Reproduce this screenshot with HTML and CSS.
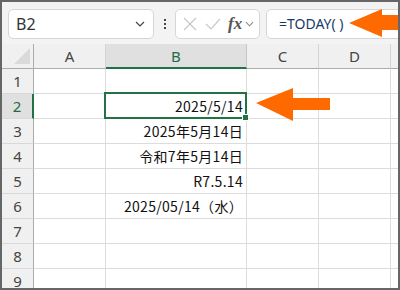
FILE: index.html
```html
<!DOCTYPE html>
<html lang="ja">
<head>
  <meta charset="UTF-8" />
  <title>TODAY関数</title>
  <link rel="stylesheet" href="styles.css">
</head>
<body>
  <div class="frame">
    <div class="toolbar">
      <div class="namebox">
        <span>B2</span>
        <svg class="chev" width="10" height="6" viewBox="0 0 10 6"><path d="M1 1l4 4 4-4" fill="none" stroke="#444" stroke-width="1.2"/></svg>
      </div>
      <div class="dots"><i></i><i></i><i></i></div>
      <div class="fxbox">
        <svg width="14" height="14" viewBox="0 0 14 14"><path d="M1 1l12 12M13 1L1 13" stroke="#c8c8c8" stroke-width="1.2"/></svg>
        <svg width="16" height="14" viewBox="0 0 16 14"><path d="M1 7l5 5L15 2" fill="none" stroke="#c8c8c8" stroke-width="1.2"/></svg>
        <span class="fx">fx</span>
        <svg width="9" height="6" viewBox="0 0 10 6"><path d="M1 1l4 4 4-4" fill="none" stroke="#888" stroke-width="1.2"/></svg>
      </div>
      <div class="formula">=TODAY( )</div>
    </div>

    <div class="sheet">
      <div class="hd corner"><span class="tri"></span></div>
      <div class="hd">A</div>
      <div class="hd sel-col">B</div>
      <div class="hd">C</div>
      <div class="hd">D</div>
      <div class="hd last"></div>

      <div class="rh">1</div><div class="c"></div><div class="c"></div><div class="c"></div><div class="c"></div><div class="c last"></div>
      <div class="rh sel-row">2</div><div class="c"></div><div class="c active">2025/5/14</div><div class="c"></div><div class="c"></div><div class="c last"></div>
      <div class="rh">3</div><div class="c"></div><div class="c">2025年5月14日</div><div class="c"></div><div class="c"></div><div class="c last"></div>
      <div class="rh">4</div><div class="c"></div><div class="c">令和7年5月14日</div><div class="c"></div><div class="c"></div><div class="c last"></div>
      <div class="rh">5</div><div class="c"></div><div class="c">R7.5.14</div><div class="c"></div><div class="c"></div><div class="c last"></div>
      <div class="rh">6</div><div class="c"></div><div class="c">2025/05/14（水）</div><div class="c"></div><div class="c"></div><div class="c last"></div>
      <div class="rh">7</div><div class="c"></div><div class="c"></div><div class="c"></div><div class="c"></div><div class="c last"></div>
      <div class="rh">8</div><div class="c"></div><div class="c"></div><div class="c"></div><div class="c"></div><div class="c last"></div>
      <div class="rh">9</div><div class="c"></div><div class="c"></div><div class="c"></div><div class="c"></div><div class="c last"></div>
    </div>

    <!-- arrows pointing at the formula and the result -->
    <svg class="arrow arrow-top" width="52" height="28" viewBox="0 0 52 28">
      <path d="M0 14L33 0V6H52V21H33V28Z" fill="#ff6a00"/>
    </svg>
    <svg class="arrow arrow-cell" width="74" height="33" viewBox="0 0 74 33">
      <path d="M0 15L37 0V10H74V22H37V33Z" fill="#ff6a00"/>
    </svg>
  </div>
</body>
</html>
```

FILE: styles.css
```css
body {
  margin: 0;
  font-family: 'Noto Sans CJK JP', 'Noto Sans', sans-serif;
  color: #222;
}

.frame {
  position: relative;
  width: 400px;
  height: 290px;
  box-sizing: border-box;
  border: 2px solid #666;
  overflow: hidden;
  background: #fff;
}

.toolbar {
  height: 42px;
  background: #f3f3f3;
  display: flex;
  align-items: center;
  padding-left: 6px;
  padding-top: 1px;
  box-sizing: border-box;
}

.namebox {
  width: 146px;
  height: 30px;
  box-sizing: border-box;
  background: #fff;
  border: 1px solid #d6d6d6;
  border-radius: 5px;
  display: flex;
  align-items: center;
  justify-content: space-between;
  padding: 0 8px 0 7px;
  font-family: 'Noto Sans', sans-serif;
  font-size: 16px;
  color: #333;
}

.dots {
  width: 21px;
  display: flex;
  flex-direction: column;
  align-items: center;
  gap: 2px;
}

.dots i {
  width: 2px;
  height: 2px;
  background: #444;
}

.fxbox {
  width: 85px;
  height: 30px;
  box-sizing: border-box;
  background: #fff;
  border: 1px solid #d6d6d6;
  border-radius: 5px;
  display: flex;
  align-items: center;
  gap: 8px;
  padding-left: 7px;
}

.fx {
  font-family: 'Liberation Serif', serif;
  font-style: italic;
  font-weight: bold;
  font-size: 17px;
  color: #555;
  margin-left: -1px;
  margin-right: -5px;
}

.formula {
  flex: 1;
  height: 30px;
  margin-left: 6px;
  margin-right: -8px;
  box-sizing: border-box;
  background: #fff;
  border: 1px solid #d6d6d6;
  border-radius: 5px;
  padding-left: 12px;
  display: flex;
  align-items: center;
  font-family: 'Noto Sans', sans-serif;
  font-size: 14px;
  color: #1a3a66;
}

.sheet {
  display: grid;
  grid-template-columns: 32px 72px 141px 72px 72px 1fr;
  grid-auto-rows: 25px;
  background: #fff;
}

.hd {
  background: #f0f0f0;
  border-right: 1px solid #d4d4d4;
  border-bottom: 1px solid #acacac;
  display: flex;
  align-items: center;
  justify-content: center;
  font-family: 'Noto Sans', sans-serif;
  font-size: 15px;
  color: #444;
}

.corner {
  position: relative;
  border-right-color: #acacac;
}

.tri {
  position: absolute;
  right: 3px;
  bottom: 4px;
  width: 0;
  height: 0;
  border-left: 16px solid transparent;
  border-bottom: 16px solid #dadada;
}

.sel-col {
  background: #e0e0e0;
  border-bottom: 2px solid #217346;
  border-right-color: #c6c6c6;
  color: #1f6b45;
}

.rh {
  background: #f0f0f0;
  border-right: 1px solid #acacac;
  border-bottom: 1px solid #d8d8d8;
  display: flex;
  align-items: center;
  justify-content: center;
  font-family: 'Noto Sans', sans-serif;
  font-size: 15px;
  color: #444;
}

.sel-row {
  background: #e0e0e0;
  border-right: 2px solid #217346;
  color: #1f6b45;
}

.c {
  border-right: 1px solid #dcdcdc;
  border-bottom: 1px solid #dcdcdc;
  display: flex;
  align-items: center;
  justify-content: flex-end;
  padding-right: 3px;
  font-size: 14px;
  letter-spacing: 0.3px;
  color: #111;
  white-space: nowrap;
}

.last {
  border-right: none;
}

.active {
  position: relative;
}

.active::before {
  content: '';
  position: absolute;
  top: -2px;
  left: -2px;
  right: -1px;
  bottom: -1px;
  border: 2px solid #217346;
}

.active::after {
  content: '';
  position: absolute;
  right: -3px;
  bottom: -3px;
  width: 5px;
  height: 5px;
  background: #217346;
  border: 1px solid #fff;
}

.arrow {
  position: absolute;
}

.arrow-top {
  left: 347px;
  top: 7px;
}

.arrow-cell {
  left: 254px;
  top: 86px;
}
```
